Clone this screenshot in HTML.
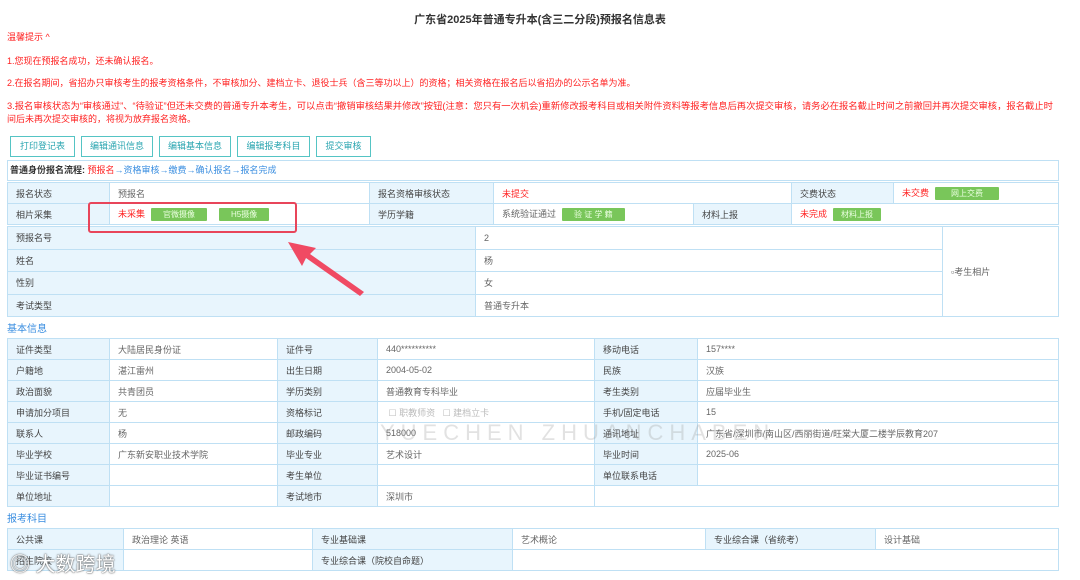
<!DOCTYPE html>
<html><head><meta charset="utf-8"><style>
*{margin:0;padding:0;box-sizing:border-box}
body{width:1080px;height:580px;background:#fff;font-family:"Liberation Sans","Noto Sans CJK SC",sans-serif;font-size:9px;color:#555;position:relative;overflow:hidden}
.a{position:absolute;white-space:nowrap}
.r,.t td.r{color:#f22}
.t{position:absolute;border-collapse:collapse;table-layout:fixed}
.t td{border:1px solid #bfe0f4;height:21px;padding:0 0 0 8px;white-space:nowrap;overflow:hidden;color:#666}
.t td.l{background:#e8f5fd;color:#444}
.g{display:inline-block;background:#79c65a;color:#eaffe0;font-size:8px;height:13px;line-height:13px;padding:0 12px;border-radius:1px;vertical-align:middle;margin-left:6px}
.btn{position:absolute;top:136px;height:21px;border:1px solid #55c4c4;color:#2aa5b0;font-size:9px;line-height:19px;text-align:center}
.h{position:absolute;left:7px;color:#3a8ee0;font-size:10px}
</style></head><body>
<div class="a" style="left:0;width:1080px;text-align:center;top:11px;font-size:11px;font-weight:bold;color:#333">广东省2025年普通专升本(含三二分段)预报名信息表</div>
<div class="a r" style="left:7px;top:30px">温馨提示 ^</div>
<div class="a r" style="left:7px;top:54px">1.您现在预报名成功，还未确认报名。</div>
<div class="a r" style="left:7px;top:76px">2.在报名期间，省招办只审核考生的报考资格条件，不审核加分、建档立卡、退役士兵（含三等功以上）的资格；相关资格在报名后以省招办的公示名单为准。</div>
<div class="a r" style="left:7px;top:98px;font-size:9.3px;width:1060px;overflow:hidden">3.报名审核状态为“审核通过”、“待验证”但还未交费的普通专升本考生，可以点击“撤销审核结果并修改”按钮(注意：您只有一次机会)重新修改报考科目或相关附件资料等报考信息后再次提交审核，请务必在报名截止时间之前撤回并再次提交审核，报名截止时</div>
<div class="a r" style="left:7px;top:112px">间后未再次提交审核的，将视为放弃报名资格。</div>
<div class="btn" style="left:10px;width:65px">打印登记表</div>
<div class="btn" style="left:81px;width:72px">编辑通讯信息</div>
<div class="btn" style="left:159px;width:72px">编辑基本信息</div>
<div class="btn" style="left:237px;width:73px">编辑报考科目</div>
<div class="btn" style="left:316px;width:55px">提交审核</div>
<div class="a" style="left:7px;top:160px;width:1052px;height:21px;border:1px solid #bfe0f4;padding-left:2px;line-height:19px"><b style="color:#333">普通身份报名流程:</b> <span class="r">预报名</span><span style="color:#3a8ee0">→资格审核→缴费→确认报名→报名完成</span></div>
<table class="t" style="left:7px;top:182px;width:1052px">
<col style="width:102px"><col style="width:260px"><col style="width:124px"><col style="width:200px"><col style="width:98px"><col style="width:102px"><col>
<tr><td class="l">报名状态</td><td>预报名</td><td class="l">报名资格审核状态</td><td colspan="2" class="r">未提交</td><td class="l">交费状态</td><td><span class="r">未交费</span><span class="g" style="padding:0 16px">网上交费</span></td></tr>
<tr><td class="l">相片采集</td><td><span class="r">未采集</span><span class="g">官微摄像</span><span class="g" style="margin-left:12px">H5摄像</span></td><td class="l">学历学籍</td><td>系统验证通过<span class="g">验 证 学 籍</span></td><td class="l">材料上报</td><td colspan="2"><span class="r">未完成</span><span class="g" style="padding:0 8px">材料上报</span></td></tr>
</table>
<table class="t" style="left:7px;top:226px;width:1052px">
<col style="width:468px"><col style="width:467px"><col>
<tr><td class="l">预报名号</td><td>2</td><td rowspan="4" style="height:90px;vertical-align:middle">▫考生相片</td></tr>
<tr><td class="l">姓名</td><td>杨</td></tr>
<tr><td class="l">性别</td><td>女</td></tr>
<tr><td class="l">考试类型</td><td>普通专升本</td></tr>
</table>
<div class="a" style="left:88px;top:202px;width:209px;height:31px;border:2px solid #e8455a;border-radius:3px"></div>
<svg class="a" style="left:280px;top:236px" width="90" height="64"><polygon points="8,6 36,12 30,18 84,56 80,60 26,22 22,30" fill="#f04a63"/></svg>
<div class="h" style="top:320px">基本信息</div>
<table class="t" style="left:7px;top:338px;width:1052px">
<col style="width:102px"><col style="width:168px"><col style="width:100px"><col style="width:217px"><col style="width:103px"><col>
<tr><td class="l">证件类型</td><td>大陆居民身份证</td><td class="l">证件号</td><td>440**********</td><td class="l">移动电话</td><td>157****</td></tr>
<tr><td class="l">户籍地</td><td>湛江雷州</td><td class="l">出生日期</td><td>2004-05-02</td><td class="l">民族</td><td>汉族</td></tr>
<tr><td class="l">政治面貌</td><td>共青团员</td><td class="l">学历类别</td><td>普通教育专科毕业</td><td class="l">考生类别</td><td>应届毕业生</td></tr>
<tr><td class="l">申请加分项目</td><td>无</td><td class="l">资格标记</td><td style="color:#bbb">&nbsp;☐ 职教师资 &nbsp; ☐ 建档立卡</td><td class="l">手机/固定电话</td><td>15</td></tr>
<tr><td class="l">联系人</td><td>杨</td><td class="l">邮政编码</td><td>518000</td><td class="l">通讯地址</td><td>广东省/深圳市/南山区/西丽街道/旺棠大厦二楼学辰教育207</td></tr>
<tr><td class="l">毕业学校</td><td>广东新安职业技术学院</td><td class="l">毕业专业</td><td>艺术设计</td><td class="l">毕业时间</td><td>2025-06</td></tr>
<tr><td class="l">毕业证书编号</td><td></td><td class="l">考生单位</td><td></td><td class="l">单位联系电话</td><td></td></tr>
<tr><td class="l">单位地址</td><td></td><td class="l">考试地市</td><td>深圳市</td><td colspan="2"></td></tr>
</table>
<div class="a" style="left:380px;top:420px;font-size:22px;letter-spacing:6px;color:rgba(150,150,150,.28)">YUECHEN ZHUANCHABEN</div>
<div class="h" style="top:510px">报考科目</div>
<table class="t" style="left:7px;top:528px;width:1052px">
<col style="width:116px"><col style="width:189px"><col style="width:200px"><col style="width:193px"><col style="width:170px"><col>
<tr><td class="l">公共课</td><td>政治理论 英语</td><td class="l">专业基础课</td><td>艺术概论</td><td class="l">专业综合课（省统考）</td><td>设计基础</td></tr>
<tr><td class="l">招生院校</td><td></td><td class="l">专业综合课（院校自命题）</td><td colspan="3"></td></tr>
</table>
<div class="a" style="left:10px;top:548px;font-size:20px;color:#fff;text-shadow:0 0 2px #666,0 0 1px #444">◎ 大数跨境</div>
</body></html>
